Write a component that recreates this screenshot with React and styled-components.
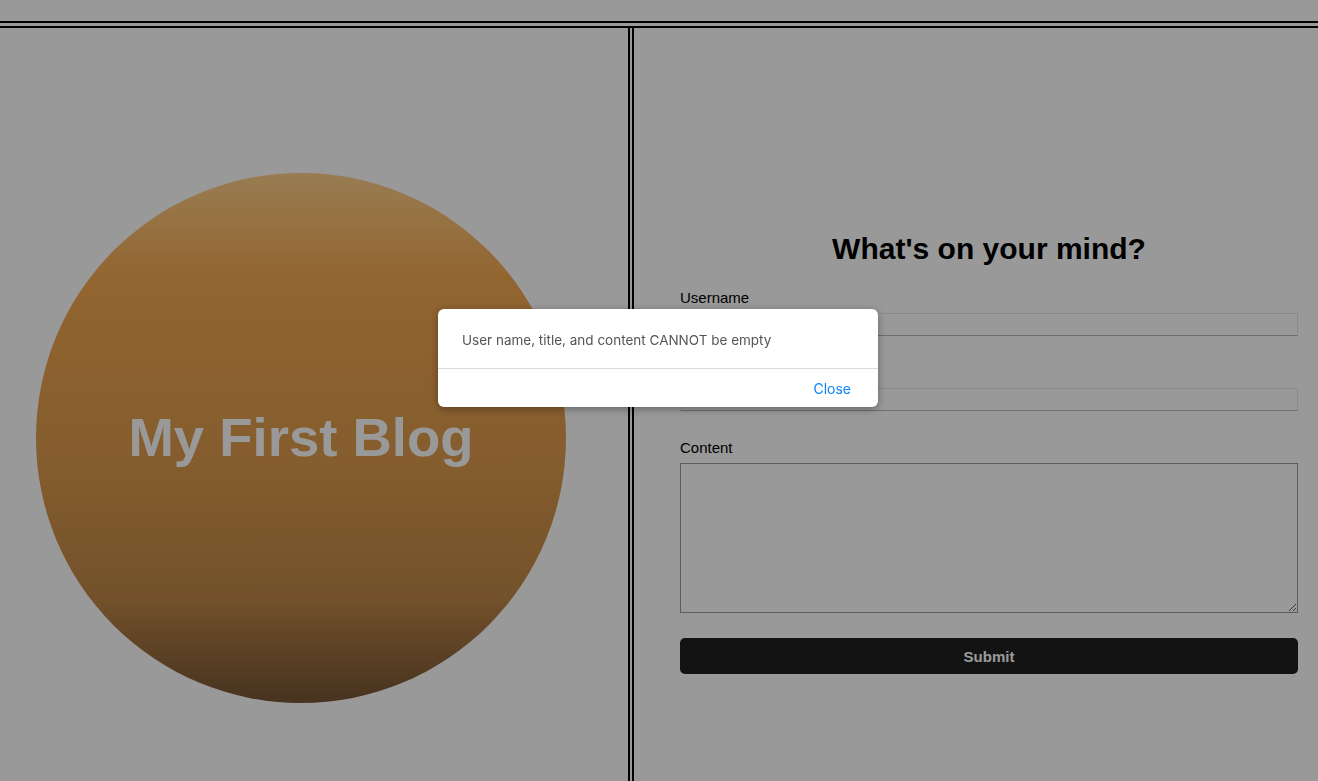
import React from 'react';
import styled, { createGlobalStyle } from 'styled-components';

const GlobalStyle = createGlobalStyle`
  html, body {
    margin: 0;
    padding: 0;
    background: #fff;
    font-family: "Liberation Sans", Arial, sans-serif;
  }
  * {
    box-sizing: border-box;
  }
`;

const Page = styled.div`
  height: 100vh;
  display: flex;
  flex-direction: column;
  overflow: hidden;
`;

const TopBar = styled.header`
  height: 23px;
  flex-shrink: 0;
  border-bottom: 2px solid #000;
`;

const Main = styled.main`
  flex: 1;
  display: flex;
  margin-top: 3px;
  border-top: 2px solid #000;
`;

const LeftPanel = styled.section`
  width: 630px;
  flex-shrink: 0;
  border-right: 2px solid #000;
  padding: 145px 0 0 36px;
`;

const Circle = styled.div`
  width: 530px;
  height: 530px;
  border-radius: 50%;
  background: linear-gradient(
    to bottom,
    #ffcf8a 0%,
    #f4a850 20%,
    #dd9b4d 55%,
    #c08848 80%,
    #765534 100%
  );
  display: flex;
  align-items: center;
  justify-content: center;
`;

const BlogTitle = styled.h1`
  margin: 0;
  color: #fff;
  font-size: 54.5px;
  font-weight: 700;
  line-height: 1;
`;

const RightPanel = styled.section`
  flex: 1;
  margin-left: 2px;
  border-left: 2px solid #000;
  padding: 204px 20px 0 46px;
`;

const Heading = styled.h2`
  margin: 0 0 23px;
  text-align: center;
  font-size: 30px;
  line-height: 34px;
  font-weight: 700;
  color: #000;
`;

const Field = styled.div`
  margin-bottom: ${props => props.gap}px;
`;

const Label = styled.label`
  display: block;
  font-size: 15px;
  line-height: 17px;
  color: #000;
  margin-bottom: 7px;
`;

const Input = styled.input`
  display: block;
  width: 100%;
  height: 23px;
  border: 1px solid #e6e6e6;
  border-bottom-color: #b8b8b8;
  background: #fff;
  outline: none;
`;

const TextArea = styled.textarea`
  display: block;
  width: 100%;
  height: 150px;
  border: 1px solid #9a9a9a;
  background: #fff;
`;

const SubmitButton = styled.button`
  display: block;
  width: 100%;
  height: 36px;
  border: none;
  border-radius: 5px;
  background: #202020;
  color: #fff;
  font-family: "Liberation Sans", Arial, sans-serif;
  font-size: 15px;
  font-weight: 700;
  cursor: pointer;
`;

const Backdrop = styled.div`
  position: fixed;
  inset: 0;
  background: rgba(0, 0, 0, 0.4);
`;

const Modal = styled.div`
  position: fixed;
  top: 309px;
  left: 438px;
  width: 440px;
  background: #fff;
  border-radius: 6px;
  box-shadow: 0 2px 8px rgba(0, 0, 0, 0.35);
  font-family: Inter, "Noto Sans", sans-serif;
`;

const ModalBody = styled.div`
  height: 60px;
  padding: 3px 24px 0;
  display: flex;
  align-items: center;
  font-size: 13.5px;
  color: #555;
  border-bottom: 1px solid #dcdcdc;
`;

const ModalFooter = styled.div`
  height: 38px;
  padding: 0 27px;
  display: flex;
  align-items: center;
  justify-content: flex-end;
`;

const CloseButton = styled.button`
  border: none;
  background: none;
  padding: 0;
  font-family: Inter, "Noto Sans", sans-serif;
  font-size: 14px;
  color: #0a84ff;
  cursor: pointer;
`;

const App = () => (
  <Page>
    <GlobalStyle />
    <TopBar />
    <Main>
      <LeftPanel>
        <Circle>
          <BlogTitle>My First Blog</BlogTitle>
        </Circle>
      </LeftPanel>

      <RightPanel>
        <Heading>What's on your mind?</Heading>
        <Field gap={28}>
          <Label htmlFor="username">Username</Label>
          <Input id="username" />
        </Field>
        <Field gap={28}>
          <Label htmlFor="title">Title</Label>
          <Input id="title" />
        </Field>
        <Field gap={25}>
          <Label htmlFor="content">Content</Label>
          <TextArea id="content" />
        </Field>
        <SubmitButton>Submit</SubmitButton>
      </RightPanel>
    </Main>

    <Backdrop />
    <Modal>
      <ModalBody>User name, title, and content CANNOT be empty</ModalBody>
      <ModalFooter>
        <CloseButton>Close</CloseButton>
      </ModalFooter>
    </Modal>
  </Page>
);

export default App;
